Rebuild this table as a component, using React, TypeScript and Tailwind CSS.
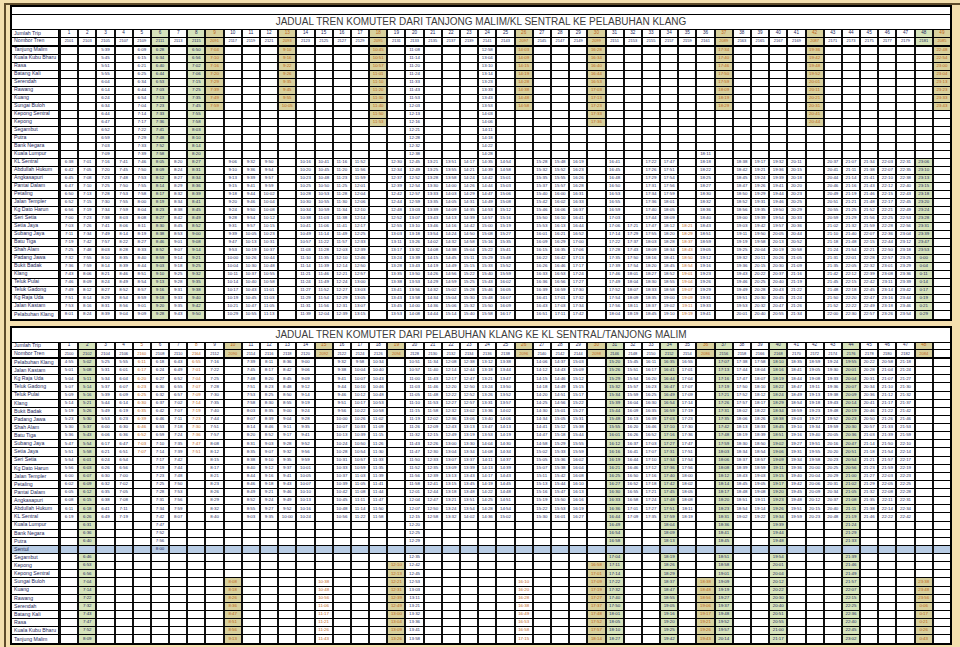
import React from "react";

type C = { n: string; t: string; f: number; to: number; bg?: "g" | "t"; o?: boolean; h?: "g" | "t" | "o"; skip?: number };

const toMin = (s: string) => {
  const [h, m] = s.split(":").map(Number);
  return h * 60 + m;
};
const fmt = (m: number) => {
  const x = ((m % 1440) + 1440) % 1440;
  const h = Math.floor(x / 60);
  const mm = x % 60;
  return `${h}:${mm.toString().padStart(2, "0")}`;
};

const topStations = [
  "Tanjung Malim", "Kuala Kubu Bharu", "Rasa", "Batang Kali", "Serendah", "Rawang", "Kuang", "Sungai Buloh",
  "Kepong Sentral", "Kepong", "Segambut", "Putra", "Bank Negara", "Kuala Lumpur", "KL Sentral", "Abdullah Hukum",
  "Angkasapuri", "Pantai Dalam", "Petaling", "Jalan Templer", "Kg Dato Harun", "Seri Setia", "Setia Jaya",
  "Subang Jaya", "Batu Tiga", "Shah Alam", "Padang Jawa", "Bukit Badak", "Klang", "Teluk Pulai", "Teluk Gadong",
  "Kg Raja Uda", "Jalan Kastam", "Pelabuhan Klang",
];
const botStations = [
  "Pelabuhan Klang", "Jalan Kastam", "Kg Raja Uda", "Teluk Gadong", "Teluk Pulai", "Klang", "Bukit Badak",
  "Padang Jawa", "Shah Alam", "Batu Tiga", "Subang Jaya", "Setia Jaya", "Seri Setia", "Kg Dato Harun",
  "Jalan Templer", "Petaling", "Pantai Dalam", "Angkasapuri", "Abdullah Hukum", "KL Sentral", "Kuala Lumpur",
  "Bank Negara", "Putra", "Sentul", "Segambut", "Kepong", "Kepong Sentral", "Sungai Buloh", "Kuang", "Rawang",
  "Serendah", "Batang Kali", "Rasa", "Kuala Kubu Bharu", "Tanjung Malim",
];

const TOFF = [
  ...[0, 6, 12, 16, 25, 35, 45, 55, 65, 68, 73, 80, 84, 90].map((x) => x - 97),
  ...[0, 4, 7, 9, 12, 14, 18, 22, 25, 33, 41, 47, 54, 58, 65, 68, 71, 73, 75, 83],
];
const BOFF = [
  ...[0, 6, 9, 12, 14, 19, 24, 28, 35, 41, 52, 56, 59, 61, 65, 67, 70, 73, 76, 84],
  ...[5, 10, 14, 18, 20, 27, 30, 38, 48, 56, 66, 77, 81, 86, 103].map((x) => x + 84),
];

const S = (n: string, t: string): C => ({ n, t, f: 14, to: 33 });
const F = (n: string, t: string, g?: boolean): C => (g ? { n, t, f: 0, to: 33, bg: "g", h: "g" } : { n, t, f: 0, to: 33 });
const TT = (n: string, t: string, to: number): C => ({ n, t, f: 0, to, bg: "t", o: true, h: "t" });

const topCols: C[] = [
  S("2101", "6:38"), S("2103", "7:01"), F("2105", "7:16"), S("2107", "7:41"), F("2109", "7:46"),
  F("2111", "8:05", true), S("2113", "8:20"), F("2115", "8:27", true), TT("2091", "8:41", 7),
  S("2117", "9:06"), S("2119", "9:32"), S("2121", "9:50"), TT("2093", "10:47", 7), S("2123", "10:16"),
  S("2125", "10:41"), S("2127", "11:16"), S("2129", "11:52"), TT("2095", "12:22", 9), S("2131", "12:30"),
  F("2133", "12:45"), S("2135", "13:21"), S("2137", "13:51"), S("2139", "14:17"), F("2141", "14:35"),
  S("2143", "14:54"), TT("2097", "15:40", 7), S("2145", "15:28"), S("2147", "15:48"), S("2149", "16:19"),
  TT("2099", "18:05", 9), S("2151", "16:41"), { n: "2153", t: "16:56", f: 22, to: 33 }, S("2155", "17:22"),
  S("2157", "17:47"), { n: "2159", t: "17:56", f: 22, to: 33, o: true }, { n: "2161", t: "18:18", f: 13, to: 33 },
  TT("2089", "19:11", 7), S("2163", "18:38"), S("2165", "19:17"), S("2167", "19:32"), S("2169", "20:11"),
  TT("2087", "21:13", 9), S("2171", "20:37"), S("2173", "21:07"), S("2175", "21:34"), S("2177", "22:03"),
  S("2179", "22:31"), { n: "2181", t: "23:06", f: 14, to: 33, bg: "g", h: "g" }, TT("2085", "24:25", 7),
];

const BS = (n: string, t: string): C => ({ n, t, f: 0, to: 19 });
const BF = (n: string, t: string, g?: boolean): C =>
  g ? { n, t, f: 0, to: 34, bg: "g", h: "g", skip: 23 } : { n, t, f: 0, to: 34, skip: 23 };
const BT = (n: string, t: string, f: number): C => ({ n, t, f, to: 34, bg: "t", o: true, h: "t" });
const BO = (n: string, t: string): C => ({ n, t, f: 27, to: 34, o: true, h: "t" });

const botCols: C[] = [
  BS("2100", "4:55"), BF("2102", "5:02", true), BS("2104", "5:25"), BS("2106", "5:55"),
  { n: "2160", t: "6:11", f: 0, to: 11, o: true, h: "o" }, { n: "2108", t: "6:18", f: 0, to: 23 },
  BS("2110", "6:43"), { n: "2164", t: "6:55", f: 0, to: 11, o: true, h: "o" }, BS("2112", "7:16"),
  BT("2090", "6:06", 27), BS("2114", "7:39"), BS("2116", "8:11"), BS("2118", "8:36"), BS("2120", "9:00"),
  BO("2092", "8:36"), BS("2122", "9:32"), BS("2124", "9:58"), BS("2126", "10:34"), BT("2094", "10:19", 25),
  BF("2128", "10:51"), BS("2130", "11:34"), BS("2132", "12:08"), BS("2134", "12:38"), BS("2136", "13:12"),
  BS("2138", "13:38"), BO("2096", "14:08"), BS("2140", "14:06"), BS("2142", "14:37"), BS("2144", "15:03"),
  BT("2098", "15:07", 25), BF("2146", "15:20", true), BS("2148", "15:45"), BS("2150", "16:11"),
  BF("2152", "16:35", true), BS("2154", "16:55"), BT("2086", "16:36", 27), BF("2156", "17:07", true),
  BS("2158", "17:38"), BS("2166", "17:58"), BF("2168", "18:10", true), BS("2170", "18:35"), BS("2172", "18:59"),
  BS("2174", "19:24"), BF("2176", "19:55", true), BS("2178", "20:22"), BS("2180", "20:58"), BS("2182", "21:18"),
  BT("2084", "21:36", 27),
];

const GRID = "grid grid-cols-[47px_repeat(49,minmax(0,1fr))]";

function HeadCell({ text, h, small }: { text: string; h?: "g" | "t" | "o"; small?: boolean }) {
  const bg = h === "g" ? "bg-[#d6e3bb]" : h === "t" ? "bg-[#d8d09c]" : "";
  const col = h === "t" || h === "o" ? "text-[#c0651a]" : "text-[#1f2a60]";
  return (
    <div
      className={`border-l-2 border-[#111] flex items-center justify-center overflow-hidden whitespace-nowrap leading-none ${
        small ? "text-[4px]" : "text-[4.6px]"
      } ${bg} ${col}`}
    >
      {text}
    </div>
  );
}

function Table({
  title,
  stations,
  cols,
  offs,
  rowH,
  topStrip,
}: {
  title: string;
  stations: string[];
  cols: C[];
  offs: number[];
  rowH: string;
  topStrip: boolean;
}) {
  const padded: (C | null)[] = [...cols];
  while (padded.length < 49) padded.push(null);
  return (
    <div className="border-2 border-black bg-white">
      {topStrip && <div className="h-[8px] border-b border-black" />}
      <div className="h-[15px] border-b border-black flex items-center justify-center text-[10px] leading-none text-[#3c3c3c] whitespace-nowrap">
        {title}
      </div>
      <div className={`${GRID} h-[7.5px] border-b border-black`}>
        <div className="border-r border-black flex items-center pl-[2px] text-[5.2px] leading-none text-[#1f2a60] whitespace-nowrap">
          Jumlah Trip
        </div>
        {padded.map((c, i) => (
          <HeadCell key={i} text={c ? String(i + 1) : ""} h={c?.h} />
        ))}
      </div>
      <div className={`${GRID} h-[9px] border-b-2 border-black`}>
        <div className="border-r border-black flex items-center pl-[2px] text-[5.2px] leading-none text-[#1f2a60] whitespace-nowrap">
          Nombor Tren
        </div>
        {padded.map((c, i) => (
          <HeadCell key={i} text={c ? c.n : ""} h={c?.h} small />
        ))}
      </div>
      {stations.map((st, r) => {
        const sentul = st === "Sentul";
        const last = r === stations.length - 1;
        return (
          <div
            key={r}
            className={`${GRID} ${rowH} ${last ? "" : "border-b border-black"} ${sentul ? "bg-[#b8cce4]" : ""}`}
          >
            <div className="border-r border-black flex items-center pl-[2px] text-[5.2px] leading-none text-[#1f2a60] whitespace-nowrap overflow-hidden">
              {st}
            </div>
            {padded.map((c, i) => {
              const has = c && r >= c.f && r <= c.to && c.skip !== r;
              const bg =
                has && !sentul ? (c!.bg === "g" ? "bg-[#d6e3bb]" : c!.bg === "t" ? "bg-[#d8d09c]" : "") : "";
              const col = has && c!.o ? "text-[#c0651a]" : "text-[#1f2a60]";
              return (
                <div
                  key={i}
                  className={`border-l-2 border-[#111] flex items-center justify-center overflow-hidden whitespace-nowrap text-[4.4px] leading-none ${bg} ${col}`}
                >
                  {has ? fmt(toMin(c!.t) + offs[r]) : ""}
                </div>
              );
            })}
          </div>
        );
      })}
    </div>
  );
}

export default function App() {
  return (
    <div
      className="w-[960px] h-[647px] bg-[#f4dfae] overflow-hidden pt-[3px] pl-[4px]"
      style={{ fontFamily: '"Liberation Sans", Arial, sans-serif' }}
    >
      <div className="h-[700px] border-t-2 border-l-2 border-[#5e4b2b] pl-[4px] pr-[8px] flex flex-col">
        <Table
          title="JADUAL TREN KOMUTER DARI TANJONG MALIM/KL SENTRAL KE PELABUHAN KLANG"
          stations={topStations}
          cols={topCols}
          offs={TOFF}
          rowH="h-[8px]"
          topStrip
        />
        <div className="h-[5px] shrink-0" />
        <Table
          title="JADUAL TREN KOMUTER DARI PELABUHAN KLANG KE KL SENTRAL/TANJONG MALIM"
          stations={botStations}
          cols={botCols}
          offs={BOFF}
          rowH="h-[8.13px]"
          topStrip={false}
        />
      </div>
    </div>
  );
}
